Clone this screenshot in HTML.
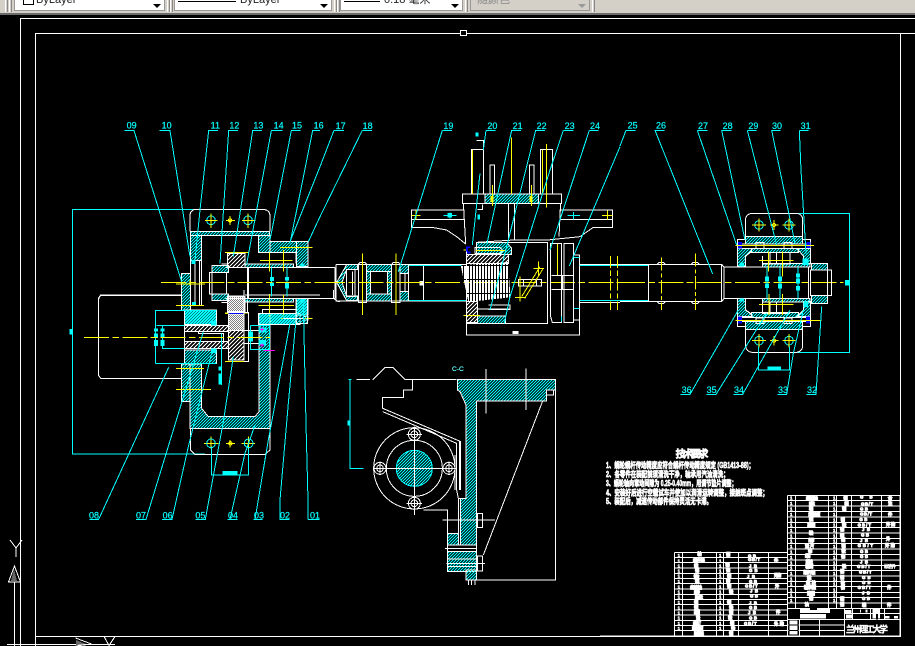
<!DOCTYPE html>
<html lang="zh"><head><meta charset="utf-8"><title>CAD</title>
<style>
html,body{margin:0;padding:0;background:#000;width:915px;height:646px;overflow:hidden;position:relative;font-family:"Liberation Sans","Noto Sans CJK SC",sans-serif}
#tb{position:absolute;left:0;top:0;width:915px;height:13px;background:#d4d0c8;border-bottom:2px solid #6b6b6b;overflow:hidden}
.dd{position:absolute;top:-4px;height:15px;background:#fff;border:1px solid #999;box-sizing:border-box;font-size:11px;line-height:11px;color:#222;white-space:nowrap;overflow:hidden}
.dd i{position:absolute;right:3px;top:7px;width:0;height:0;border:4px solid transparent;border-top:4px solid #000;border-bottom:0}
.dd span{position:absolute;top:-2px}
.dd b{position:absolute;height:1px;background:#000;top:4px}
.gr{position:absolute;top:0;width:3px;height:12px;border-left:1px solid #fff;border-right:1px solid #888;box-sizing:border-box}
svg{position:absolute;left:0;top:0}
.w,.c,.y,.m,.b{fill:none;stroke-width:3;vector-effect:none}
.w{stroke:#fff}.c{stroke:#0ff}.y{stroke:#ff0}.m{stroke:#f0f}.b{stroke:#00f;stroke-width:12}
.hc{fill:url(#hc);stroke:#fff;stroke-width:3}
.hw{fill:url(#hw);stroke:#fff;stroke-width:3}
.cd{stroke-dasharray:75 10 20 10}
.l{fill:#0ff;font:27px "Liberation Sans",sans-serif;stroke:#0ff;stroke-width:.6}
.t{fill:#fff;stroke:#fff;stroke-width:2.4;font:bold 13px "Liberation Sans","Noto Sans CJK SC",sans-serif}
.n{fill:#fff;stroke:#fff;stroke-width:1.5;font:bold 13px "Liberation Sans",sans-serif}
</style></head><body>
<div id="tb">
<div class="gr" style="left:5px"></div><div class="gr" style="left:9px"></div><div class="gr" style="left:167px"></div><div class="gr" style="left:170px"></div><div class="gr" style="left:334px"></div><div class="gr" style="left:337px"></div><div class="gr" style="left:465px"></div><div class="gr" style="left:592px"></div>
<div class="dd" style="left:14px;width:151px"><span style="left:8px;top:-3px;width:9px;height:9px;border:1px solid #000"></span><span style="left:21px">ByLayer</span><i></i></div>
<div class="dd" style="left:174px;width:158px"><b style="left:3px;width:58px"></b><span style="left:65px">ByLayer</span><i></i></div>
<div class="dd" style="left:340px;width:123px"><b style="left:3px;width:36px"></b><span style="left:43px">0.18 毫米</span><i></i></div>
<div class="dd" style="left:470px;width:120px;background:#d4d0c8;color:#888"><span style="left:6px">随颜色</span><i style="border-top-color:#999"></i></div>
</div>
<svg width="915" height="646" viewBox="0 0 915 646" shape-rendering="crispEdges" style="top:0">
<defs>
<pattern id="hc" width="9" height="9" patternUnits="userSpaceOnUse"><path d="M-3 12L12 -3M-3 3L3 -3M6 12L12 6" stroke="#0ff" stroke-width="3.2"/></pattern>
<pattern id="hw" width="12" height="12" patternUnits="userSpaceOnUse"><path d="M-3 15L15 -3M-3 3L3 -3M9 15L15 9" stroke="#fff" stroke-width="3"/></pattern>
<pattern id="st" width="9" height="42" patternUnits="userSpaceOnUse"><path d="M0 0h6v42h-6z" fill="#fff"/><path d="M0 15h9v3h-9z" fill="#000"/></pattern>
</defs>
<!-- frames -->
<g fill="none" stroke="#fff" stroke-width="1">
<path d="M20.5 646V18.5H915M35.5 646V33.5H915" />
<path d="M35.5 636.5H900.5V33.5"/>
<rect x="460.5" y="30.5" width="6" height="5" fill="#000"/>
<path d="M10 540l6 8 6-8M16 548v9M14.5 566l-6 16h12zM14.5 582V646M7 644.5H115M75.5 638l16 6-16 2M104 636.5l5 9 6-9"/>
</g>
<path d="M14 569l-3 12h6z" fill="#666"/><path d="M76 640l10 4-10 1z" fill="#666"/>

<!-- Z1 top left mechanism -->
<g transform="translate(0,100) scale(.33333)">
<path class="c" d="M218 690V328H600M208 688h10"/>
<path class="w" d="M570 395V345Q572 328 590 328H790Q808 330 810 345V395"/>
<rect class="hc" x="572" y="394" width="236" height="12"/>
<rect class="hc" x="572" y="406" width="33" height="75"/>
<rect class="hc" x="545" y="520" width="27" height="112"/>
<path class="w" d="M572 482H605V617H572ZM585 482V617M598 482V617"/>
<rect class="hc" x="553" y="630" width="97" height="45"/>
<path d="M635 663h14v14h-14zM574 480h12v12h-12zM578 606h10v10h-10z" fill="#0ff"/>
<path class="c" d="M466 632H553M466 632V690M470 677H553"/>
<rect class="hw" x="682" y="460" width="53" height="43"/>
<rect class="hw" x="682" y="590" width="53" height="45"/>
<rect class="hw" x="685" y="642" width="47" height="50"/>
<rect class="hc" x="636" y="497" width="49" height="20"/>
<rect class="hc" x="636" y="582" width="49" height="20"/>
<path class="w" d="M628 517H680V582H628ZM636 517V582M664 492H682M664 607H682M676 503H745V595H676M742 503V640M735 585H960M743 503H960M743 595H960M296 690V597Q298 587 306 586H545"/>
<rect class="hc" x="735" y="492" width="145" height="11"/>
<rect class="hc" x="735" y="595" width="145" height="11"/>
<rect class="hc" x="775" y="406" width="35" height="52"/>
<rect class="hc" x="810" y="424" width="80" height="34"/>
<rect class="hc" x="890" y="424" width="34" height="76"/>
<rect class="hc" x="775" y="640" width="115" height="34"/>
<rect class="hc" x="890" y="595" width="34" height="50"/>
<path class="w" d="M787 458H888V490M787 640V628H888V606M910 650H924V660H910"/>
<path class="c" d="M815 503V590M861 503V590M908 490V500M908 595V605"/>
<path d="M810 531h12v12h-12zM810 548h12v10h-12zM855 531h12v10h-12zM855 547h12v18h-12zM902 490h12v10h-12zM902 595h12v12h-12z" fill="#0ff"/>
<path class="y cd" d="M483 547H960"/>
<path class="y" d="M808 458V515M851 450V515M808 585V650M851 585V650M780 482H878M840 442H938M775 616H880M840 655H938M675 457H745M675 639H745M528 552H615M528 617H612M570 540V555"/>
<circle class="c" cx="633" cy="361" r="13"/><circle class="y" cx="690" cy="361" r="5"/><circle class="c" cx="744" cy="361" r="13"/>
<path class="y" d="M615 361H653M633 340V384M678 361H705M690 348V375M726 361H766M744 340V384"/>
<path class="m" d="M775 688h27" stroke-width="6"/>
<path class="c" d="M373 92H402L545 545M478 92H510L570 470M654 92H626L600 330 585 480M714 92H686L660 490M786 92H758L700 470M848 92H814L740 492M902 92H874L810 420M960 92H938L870 430M960 200L870 425M960 350L925 425"/>
<text class="l" x="380" y="86">09</text><text class="l" x="485" y="86">10</text><text class="l" x="632" y="86">11</text><text class="l" x="688" y="86">12</text><text class="l" x="760" y="86">13</text><text class="l" x="821" y="86">14</text><text class="l" x="876" y="86">15</text><text class="l" x="941" y="86">16</text>
</g>

<!-- Z2 lower left -->
<g transform="translate(60,290) scale(.33333)">
<path class="w" d="M364 15H122L115 25V255L122 265H364"/>
<path class="c" d="M37 0V492H435"/>
<rect x="28" y="117" width="9" height="16" fill="#0ff"/>
<rect class="hc" x="374" y="62" width="96" height="41"/>
<rect class="hc" x="374" y="180" width="96" height="40"/>
<rect class="hc" x="364" y="222" width="26" height="113"/>
<path class="hc" d="M390 222H425V355L445 380H585L597 365V70H630V415H390Z"/>
<path class="w" d="M390 415H630V480L615 493H405L392 480V415"/>
<rect class="hw" x="374" y="107" width="131" height="18"/>
<rect class="hw" x="374" y="155" width="131" height="20"/>
<rect class="hw" x="505" y="70" width="47" height="140"/>
<path class="hw" d="M502 18H552V68H502Z"/>
<path class="w" d="M415 125H505V155M374 103V180M415 125V131H490V155M552 68H566V214H505M552 122H595M552 160H595M552 122V160"/>
<path d="M453 93h16v14h-16zM453 175h16v14h-16zM396 36h12v12h-12z" fill="#0ff"/>
<path class="c" d="M287 220V62H470M287 220H470M307 107H374M307 107V175H374M455 470V555H565V470M485 130V285M571 107V178H628V107H571"/>
<path d="M282 115h12v10h-12zM282 130h12v14h-12zM282 150h12v18h-12zM302 115h12v10h-12zM302 130h12v14h-12zM302 150h12v18h-12zM488 543h44v13h-44zM475 230h10v12h-10zM475 250h10v34h-10zM565 125h14v30h-14zM595 112h24v16h-24zM596 150h22v16h-22z" fill="#0ff"/>
<path class="y cd" d="M72 142H630"/>
<path class="y" d="M348 46H432M348 235H432M348 298H453M495 70H552M495 214H552M595 46H702M628 12V80M670 15V80M660 85H758M510 450V472M498 460H525M453 440V475M432 460H475M566 440V475M545 460H585"/>
<circle class="c" cx="453" cy="460" r="13"/><circle class="y" cx="511" cy="460" r="5"/><circle class="c" cx="566" cy="460" r="13"/>
<path d="M505 70h45" stroke="#00f" stroke-width="3"/>
<path class="m" d="M600 118H612M606 112V124M600 165H612M606 160V172M610 182H645"/>
<path class="w" d="M552 0V25M820 25H552M820 0V25L835 35H840"/>
<rect class="hc" x="595" y="70" width="125" height="34"/>
<rect class="hc" x="708" y="25" width="35" height="75"/>
<path class="w" d="M670 85H730V100H743V70M730 75V100"/>
<path class="c" d="M88 688H116L326 232M228 688H258L395 240 430 125M306 688H336L385 470 455 190M406 688H436L490 395 520 200M502 688H532M510 688L555 490 585 405M580 688H608M585 688L625 450 690 100M658 688H688M660 688V630L685 340 707 100M744 688H778M744 688V630L738 400 730 40"/>
<text class="l" x="87" y="685">08</text><text class="l" x="228" y="685">07</text><text class="l" x="308" y="685">06</text><text class="l" x="406" y="685">05</text><text class="l" x="504" y="685">04</text><text class="l" x="582" y="685">03</text><text class="l" x="660" y="685">02</text><text class="l" x="750" y="685">01</text>
</g>

<!-- Z3 centre -->
<g transform="translate(320,120) scale(.33333)">
<path class="w" d="M0 442H45M0 535H45M45 442V535M48 433V543H265V433H48M311 433V543M265 433H440M265 543H440"/>
<path class="c" d="M265 437H440M265 541H440"/>
<path class="hc" d="M50 487L80 434H112V448H80L66 487 80 528H112V542H80Z"/>
<path class="w" d="M80 448H105V530H80ZM97 455V525"/>
<rect class="hc" x="140" y="433" width="75" height="22"/>
<rect class="hc" x="140" y="522" width="75" height="21"/>
<rect class="hc" x="140" y="455" width="11" height="67"/>
<rect class="hc" x="203" y="455" width="12" height="67"/>
<rect class="hc" x="240" y="433" width="25" height="28"/>
<rect class="hc" x="240" y="515" width="25" height="28"/>
<path class="w" d="M115 433L120 427H135L140 433V548H115V433M215 433L220 427H235L240 433V548H215V433M255 460H265V515H255Z"/>
<rect x="298" y="483" width="11" height="14" fill="#fff"/>
<path class="y" d="M127 400V585M228 400V585"/>
<path class="y cd" d="M0 487H900"/>
<!-- worm -->
<path class="hw" d="M440 403H565V430H440Z"/>
<path d="M422 436L565 426 571 532 445 546Z" fill="url(#st)"/>
<rect class="hw" x="440" y="545" width="32" height="63"/>
<path class="hc" d="M470 367H560L575 385V403H470Z"/>
<rect class="hc" x="472" y="588" width="84" height="22"/>
<path class="w" d="M470 382H540L548 392 540 400H465V382ZM470 567H570M505 555H570V568H505"/>
<path class="y" d="M468 391H555M430 390H450M430 586H480"/>
<rect x="438" y="380" width="13" height="20" fill="#00f"/><rect x="444" y="384" width="7" height="10" fill="#000"/>
<path class="w" d="M440 395V610H683V367H470M440 612V645H778V600M683 367H470"/>
<rect x="578" y="633" width="18" height="9" fill="#fff"/>
<!-- top -->
<path class="w" d="M427 222H725V250H427ZM455 222V88H490V222M662 222V88H697V222M510 222V135H524V222M628 222V135H642V222M430 250L437 370M722 250L717 350M565 250V360M583 250V360M274 270H432V298H274ZM274 298V322H335L380 330 410 350 437 372M720 270H878V298H720ZM878 298V322H820L780 350 683 360H583L470 367M490 90V62H470M473 268H487V254"/>
<rect class="hc" x="495" y="222" width="160" height="28"/>
<path class="y" d="M458 90V222M667 90V222M574 52V222M680 72V262M517 195V258M634 195V258M274 286H302M288 272V300M846 286H878M862 272V300"/>
<path d="M512 228h9v18h-9zM629 228h9v18h-9z" fill="#ff0"/>
<path class="c" d="M370 286H410M390 278V295M742 286H780M760 276V298"/>
<path d="M382 279h14v14h-14zM466 38h10v12h-10zM472 284h8v14h-8z" fill="#0ff"/>
<path class="w" d="M595 478H665V498H595ZM610 478V498M650 478V498"/>
<path class="y" d="M600 470V545M585 532H618M655 425V470M640 445H672M605 530L660 440M614 535L668 448"/>
<path class="w" d="M692 370H725V608H697L692 590ZM732 370H760V608H732ZM760 405H778V600H760ZM695 467H760V508H695M727 467V508"/>
<path class="y" d="M712 372V465"/>
<path class="c" d="M762 412H778M762 566H778M725 590V605M778 437H900M778 541H900"/>
<path class="w" d="M778 433H900M778 547H900"/>
<path class="y" stroke-dasharray="36 8 16 8" d="M872 408V570M892 408V570"/>
<path class="c" d="M42 31H72M42 31L0 140M127 31H156M127 31L0 290M367 31H396M367 31L235 455M498 31H527M498 31L490 90M575 31H603M575 31L500 375M647 31H675M647 31L555 400 510 570M730 31H760M730 31L690 150 570 530 553 610M808 31H836M808 31L690 390M900 80L748 438M480 160L457 375"/>
<text class="l" x="47" y="27">17</text><text class="l" x="128" y="27">18</text><text class="l" x="370" y="27">19</text><text class="l" x="502" y="27">20</text><text class="l" x="578" y="27">21</text><text class="l" x="650" y="27">22</text><text class="l" x="734" y="27">23</text><text class="l" x="810" y="27">24</text>
</g>

<!-- Z4 right -->
<g transform="translate(620,120) scale(.33333)">
<path class="c" d="M0 437H85M0 542H85M530 280H688V697H530"/>
<path class="w" d="M0 433H305V545H0M85 433V545M305 433L312 441V535L305 545M312 441H565V535H312M112 433L118 427H130L136 433M112 545L118 551H130L136 545M214 433L220 427H232L238 433M214 545L220 551H232L238 545"/>
<path class="y" stroke-dasharray="40 8 12 8" d="M124 412V570M226 400V570"/>
<path class="y cd" d="M0 487H670"/>
<path class="w" d="M377 350V295Q380 282 395 280H530Q545 282 548 295V350M377 628V680Q380 695 395 697H530Q545 695 548 680V628"/>
<circle class="c" cx="417" cy="315" r="13"/><circle class="y" cx="462" cy="315" r="5"/><circle class="c" cx="507" cy="315" r="13"/>
<circle class="c" cx="417" cy="662" r="13"/><circle class="y" cx="462" cy="662" r="5"/><circle class="c" cx="507" cy="662" r="13"/>
<path class="y" d="M396 315H438M417 295V335M450 315H475M462 300V330M487 315H527M507 295V335M396 662H438M417 642V682M450 662H475M462 648V676M487 662H527M507 642V682"/>
<rect class="hc" x="377" y="350" width="171" height="22"/>
<rect class="hc" x="377" y="605" width="171" height="23"/>
<path class="w" d="M352 358H377V372H352ZM548 358H572V372H548ZM352 605H377V620H352ZM548 605H572V620H548ZM352 372H572V385H352ZM352 592H572V605H352ZM408 368H432V385H408ZM492 368H516V385H492ZM408 594H432V610H408ZM492 594H516V610H492Z"/>
<path class="hc" d="M352 385H400L376 410V440H352Z"/>
<path class="hc" d="M352 535H376V568L400 590H352Z"/>
<path class="hc" d="M530 385H572V430H550V408Z"/>
<path class="hc" d="M550 545H572V590H530L550 570Z"/>
<rect class="hc" x="395" y="385" width="140" height="12"/>
<rect class="hc" x="395" y="578" width="140" height="14"/>
<path class="hc" d="M427 430H570V441H427Z"/>
<path class="hc" d="M427 535H570V546H427Z"/>
<path class="w" d="M427 398H510V432M427 408V432H510M450 398V432M470 398V432M427 545V580H510M450 545V580M470 545V580M376 408L395 395M376 570L395 582"/>
<path d="M354 366h12v20h-12zM560 366h12v18h-12zM354 590h12v20h-12zM558 590h12v20h-12z" fill="#00f"/>
<path d="M548 415h18v20h-18zM358 428h14v12h-14zM358 535h14v10h-14zM550 545h14v16h-14z" fill="#0ff"/>
<path class="y" d="M347 376H582M347 601H605M445 395V455M487 395V470M447 522V585M487 522V585M417 422H520M417 553H520"/>
<path class="c" d="M441 441V535M480 441V535M534 441V535"/>
<path d="M435 470h12v14h-12zM435 490h12v14h-12zM474 470h12v14h-12zM474 490h12v16h-12zM528 460h12v12h-12zM528 476h12v14h-12zM528 498h12v14h-12z" fill="#0ff"/>
<rect class="hc" x="575" y="430" width="47" height="20"/>
<rect class="hc" x="575" y="527" width="47" height="23"/>
<path class="w" d="M572 450H635V527H572ZM565 450V527M622 450V527"/>
<rect x="675" y="480" width="12" height="16" fill="#0ff"/>
<path class="c" d="M415 680V750H508V680"/>
<rect x="443" y="739" width="40" height="9" fill="#0ff"/>
<path class="c" d="M18 31H47M18 31L0 78M103 31H133M105 31L278 462M232 31H262M232 31L350 375M305 31H334M305 31L375 360M382 31H410M382 31L470 375M455 31H482M455 31L525 370M538 31H566M538 31L543 150 558 400M182 823H210L355 570M260 823H288L440 580M340 823H368L510 570M473 823H500L520 700 550 570M560 823H588L605 560"/>
<text class="l" x="23" y="26">25</text><text class="l" x="108" y="26">26</text><text class="l" x="234" y="27">27</text><text class="l" x="308" y="27">28</text><text class="l" x="385" y="27">29</text><text class="l" x="456" y="27">30</text><text class="l" x="542" y="27">31</text>
<text class="l" x="185" y="819">36</text><text class="l" x="260" y="819">35</text><text class="l" x="342" y="819">34</text><text class="l" x="474" y="819">33</text><text class="l" x="561" y="819">32</text>
</g>

<!-- Z5 C-C -->
<g transform="translate(340,355) scale(.33333)">
<text x="336" y="48" font-size="20" font-family="Liberation Sans" fill="#bff" stroke="#0ff" stroke-width=".5">C-C</text>
<path class="w" stroke-dasharray="40 8 8 8" d="M50 73H100"/>
<path class="w" d="M100 73L135 37H158L195 73H350M218 73V105H190V127H128V160L358 258V405M128 170L350 265V405L355 430H378M362 258V405M345 300V405"/>
<path class="c" d="M25 73H35M30 73V340H70"/>
<rect x="22" y="196" width="9" height="16" fill="#0ff"/>
<path class="hc" d="M352 73H646V105H620V138H410V570H362V430H378V150L360 110 352 105Z"/>
<rect class="hc" x="322" y="535" width="33" height="35"/>
<path class="hc" d="M322 590H410V650H322Z"/>
<path class="w" d="M322 570H410V590H322ZM322 612H410V635H322ZM322 650H410M322 535V650M315 580H410M320 625H435M250 465H322V535M355 430V535M308 495H465"/>
<path class="w" d="M438 42V175M558 40V165M608 138L430 600M646 105V675H380M412 475H428V518H412ZM412 603H428V648H412ZM385 675V690M395 675V690M405 675V690M620 105V120H640V105"/>
<path class="hc" d="M378 645H410V675H378Z"/>
<circle class="w" cx="223" cy="340" r="122"/><circle class="w" cx="223" cy="340" r="84"/>
<circle cx="223" cy="340" r="54" fill="url(#hc)" stroke="#0ff" stroke-width="3"/>
<path class="w" d="M170 340H276M223 286V394M100 340H345M223 215V480"/>
<g fill="#000" stroke="#fff" stroke-width="3">
<circle cx="223" cy="238" r="18"/><circle cx="120" cy="340" r="18"/><circle cx="327" cy="340" r="18"/><circle cx="223" cy="445" r="18"/>
<circle cx="223" cy="238" r="10"/><circle cx="120" cy="340" r="10"/><circle cx="327" cy="340" r="10"/><circle cx="223" cy="445" r="10"/>
</g>
<path class="w" d="M200 238H246M223 218V258M100 340H142M120 320V360M305 340H349M327 320V360M200 445H246M223 425V480"/>
</g>

<!-- Z6 tech & tables -->
<g transform="translate(600,420) scale(.33333)">
<g fill="#fff" stroke="#fff" stroke-width="2" font-size="24" font-weight="bold" font-family="Liberation Sans,Noto Sans CJK SC,sans-serif">
<text x="227" y="113" font-size="30" textLength="98">技术要求</text>
<text x="18" y="144" textLength="444" lengthAdjust="spacingAndGlyphs">1、蜗轮蜗杆传动精度应符合蜗杆传动精度规定 (GB1413-88)；</text>
<text x="18" y="171" textLength="368" lengthAdjust="spacingAndGlyphs">2、各零件在装配前须清洗干净，轴承用汽油清洗；</text>
<text x="18" y="198" textLength="392" lengthAdjust="spacingAndGlyphs">3、蜗轮轴向窜动间隙为 0.25-0.40mm，用调节垫片调整；</text>
<text x="18" y="226" textLength="486" lengthAdjust="spacingAndGlyphs">4、安装好后进行空载试车并使加以润滑运转调整，接触斑点调整；</text>
<text x="18" y="252" textLength="318" lengthAdjust="spacingAndGlyphs">5、装配后，减速传动部件保持灵活无卡滞。</text>
</g>
<path class="w" d="M562 226H900V648M562 226V648M586 226V565M686 226V565M710 226V565M755 226V565M845 226V565
M562 242H900M562 258H900M562 275H900M562 291H900M562 307H900M562 323H900M562 339H900M562 355H900M562 371H900M562 387H900M562 403H900M562 420H900M562 436H900M562 452H900M562 468H900M562 484H900M562 500H900M562 517H900M562 533H900M562 549H900M562 565H900"/>
<path class="w" d="M223 397H562M223 397V648M247 397V648M350 397V648M370 397V648M415 397V648M505 397V648
M223 413H562M223 428H562M223 444H562M223 460H562M223 475H562M223 491H562M223 507H562M223 523H562M223 538H562M223 554H562M223 570H562M223 585H562M223 601H562M223 617H562M223 632H562"/>
<path class="w" d="M0 648H900M562 598H900M598 598V648M658 598V648M733 565V648M733 581H900M757 565V598M812 565V598M854 565V598M562 615H733M562 632H733"/>
<rect x="568" y="602" width="24" height="42" fill="#fff"/><path d="M566 615h30M566 632h30" stroke="#000" stroke-width="3"/>
<rect x="600" y="566" width="90" height="13" fill="#fff"/><rect x="600" y="582" width="78" height="13" fill="#fff"/>
<path d="M735 570h20v10h-20zM738 584h18v12h-18zM818 566h22v30h-22zM855 588h14v8h-14zM882 588h12v8h-12zM780 568h3v10h-3zM796 568h6v10h-6z" fill="#fff"/>
<path d="M830 584h3v13h-3zM630 566h20v3h-20" stroke="#000" stroke-width="3"/>
<text x="738" y="638" fill="#fff" stroke="#fff" stroke-width="1" font-size="27" font-weight="bold" font-family="Liberation Sans,Noto Sans CJK SC,sans-serif" textLength="126">兰州理工大学</text>
<!-- right table numbers -->
<text class="n" x="570 570 570 570 570 570 570 570 570 570 570 570 570 570 570 570 570 570 570 570" y="239 255 271 288 304 320 336 352 368 384 400 417 433 449 465 481 497 514 530 546">11111111111111111111</text>
<text class="n" x="699 699 699 699 699 699 699 699 699 699 699 699 699 699 699 699 699 699 699 699" y="239 255 271 288 304 320 336 352 368 384 400 417 433 449 465 481 497 514 530 546">11111111111111111111</text>
<g class="t">
<text x="618" y="240" textLength="36">蜗轮轴</text><text x="627" y="256" textLength="18">轴承</text><text x="627" y="270" textLength="12">轴</text><text x="625" y="288" textLength="36">端盖板</text><text x="627" y="303" textLength="12">键</text><text x="622" y="319" textLength="24">挡圈</text><text x="627" y="343" textLength="12">轴</text><text x="625" y="366" textLength="18">螺母</text><text x="615" y="382" textLength="28">垫片</text><text x="624" y="398" textLength="12">销</text><text x="615" y="412" textLength="18">螺钉</text><text x="617" y="430" textLength="22">端盖</text><text x="616" y="444" textLength="24">轴套</text><text x="610" y="462" textLength="36">蜗杆轴</text><text x="621" y="479" textLength="12">键</text><text x="618" y="494" textLength="30">螺栓</text><text x="612" y="507" textLength="36">轴承座</text><text x="621" y="525" textLength="24">垫圈</text><text x="627" y="540" textLength="12">销</text><text x="614" y="558" textLength="12">油</text>
<text x="730" y="240" textLength="12">钢</text><text x="733" y="256" textLength="6">铜</text><text x="726" y="271" textLength="16">钢</text><text x="722" y="304" textLength="16">钢</text><text x="726" y="320" textLength="6">铁</text><text x="720" y="333" textLength="12">钢</text><text x="720" y="352" textLength="14">钢</text><text x="723" y="364" textLength="12">铜</text><text x="724" y="382" textLength="11">钢</text><text x="724" y="398" textLength="6">铁</text><text x="723" y="414" textLength="16">钢</text><text x="726" y="444" textLength="6">铁</text><text x="720" y="459" textLength="12">钢</text><text x="720" y="477" textLength="12">钢</text><text x="722" y="493" textLength="16">铁</text><text x="722" y="507" textLength="12">钢</text><text x="720" y="541" textLength="12">铜</text><text x="720" y="558" textLength="12">钢</text>
<text x="780" y="236" textLength="38">GB</text><text x="783" y="256" textLength="36">GB/T</text><text x="780" y="271" textLength="24">GB</text><text x="780" y="286" textLength="36">GB/T</text><text x="778" y="303" textLength="24">GB</text><text x="773" y="320" textLength="40">GB/T</text><text x="786" y="333" textLength="24">JB</text><text x="783" y="349" textLength="24">GB</text><text x="780" y="366" textLength="24">JB</text><text x="773" y="381" textLength="46">GB/T</text><text x="780" y="399" textLength="24">GB</text><text x="780" y="414" textLength="24">GB</text><text x="780" y="430" textLength="24">JB</text><text x="771" y="444" textLength="40">GB/T</text><text x="777" y="460" textLength="38">GB/T</text><text x="786" y="477" textLength="26">GB</text><text x="786" y="492" textLength="26">GB</text><text x="773" y="507" textLength="40">GB/T</text><text x="786" y="523" textLength="24">JB</text><text x="786" y="540" textLength="24">GB</text><text x="786" y="560" textLength="12">轴</text>
<text x="864" y="240" textLength="18">备</text><text x="864" y="255" textLength="18">注</text><text x="864" y="288" textLength="14">件</text><text x="858" y="318" textLength="28">外购</text><text x="858" y="362" textLength="20">外</text><text x="855" y="381" textLength="30">外购</text><text x="852" y="444" textLength="36" stroke-width="1">标准件</text><text x="861" y="507" textLength="18">件</text><text x="861" y="560" textLength="12">件</text>
<!-- left table -->
<text x="292" y="406" textLength="11">轴</text><text x="279" y="426" textLength="36">蜗杆盖</text><text x="282" y="442" textLength="12">键</text><text x="285" y="456" textLength="12">销</text><text x="281" y="475" textLength="18">垫片</text><text x="285" y="488" textLength="12">键</text><text x="270" y="507" textLength="36">齿轮轴</text><text x="282" y="520" textLength="18">螺母</text><text x="285" y="537" textLength="24">轴承</text><text x="282" y="552" textLength="12">销</text><text x="282" y="567" textLength="14">键</text><text x="282" y="581" textLength="18">挡圈</text><text x="288" y="598" textLength="12">垫</text><text x="279" y="615" textLength="24">螺钉</text><text x="276" y="630" textLength="34">端盖板</text><text x="282" y="645" textLength="30">轴承盖</text>
<text x="378" y="408" textLength="12">钢</text><text x="376" y="440" textLength="14">铜</text><text x="378" y="456" textLength="12">铁</text><text x="381" y="474" textLength="12">钢</text><text x="378" y="488" textLength="14">铸</text><text x="381" y="503" textLength="12">钢</text><text x="387" y="520" textLength="14">铁</text><text x="381" y="552" textLength="14">钢</text><text x="387" y="567" textLength="6">铁</text><text x="387" y="582" textLength="12">钢</text><text x="384" y="598" textLength="14">铁</text><text x="390" y="615" textLength="6">钢</text><text x="393" y="630" textLength="6">铁</text><text x="387" y="645" textLength="14">钢</text>
<text x="444" y="412" textLength="24">GB</text><text x="444" y="423" textLength="36">GB/T</text><text x="447" y="442" textLength="24">JB</text><text x="447" y="456" textLength="26">GB</text><text x="441" y="474" textLength="24">JB</text><text x="447" y="489" textLength="24">GB</text><text x="435" y="503" textLength="38">GB/T</text><text x="450" y="518" textLength="24">JB</text><text x="450" y="533" textLength="24">GB</text><text x="447" y="554" textLength="24">JB</text><text x="447" y="567" textLength="24">GB</text><text x="444" y="582" textLength="24">JB</text><text x="447" y="598" textLength="24">GB</text><text x="432" y="615" textLength="38">GB/T</text>
<text x="522" y="426" textLength="14">件</text><text x="522" y="471" textLength="22">外购</text><text x="525" y="503" textLength="20">外</text><text x="528" y="581" textLength="18">件</text><text x="522" y="616" textLength="30">外购</text>
</g>
<text class="n" x="233 233 233 233 233 233 233 233 233 233 233 233 233 233 233" y="411 427 442 458 473 489 505 521 536 552 568 583 599 615 630">111111111111111</text>
<text class="n" x="357 357 357 357 357 357 357 357 357 357 357 357 357 357 357" y="411 427 442 458 473 489 505 521 536 552 568 583 599 615 630">111111111111111</text>
</g>
</svg>
</body></html>
